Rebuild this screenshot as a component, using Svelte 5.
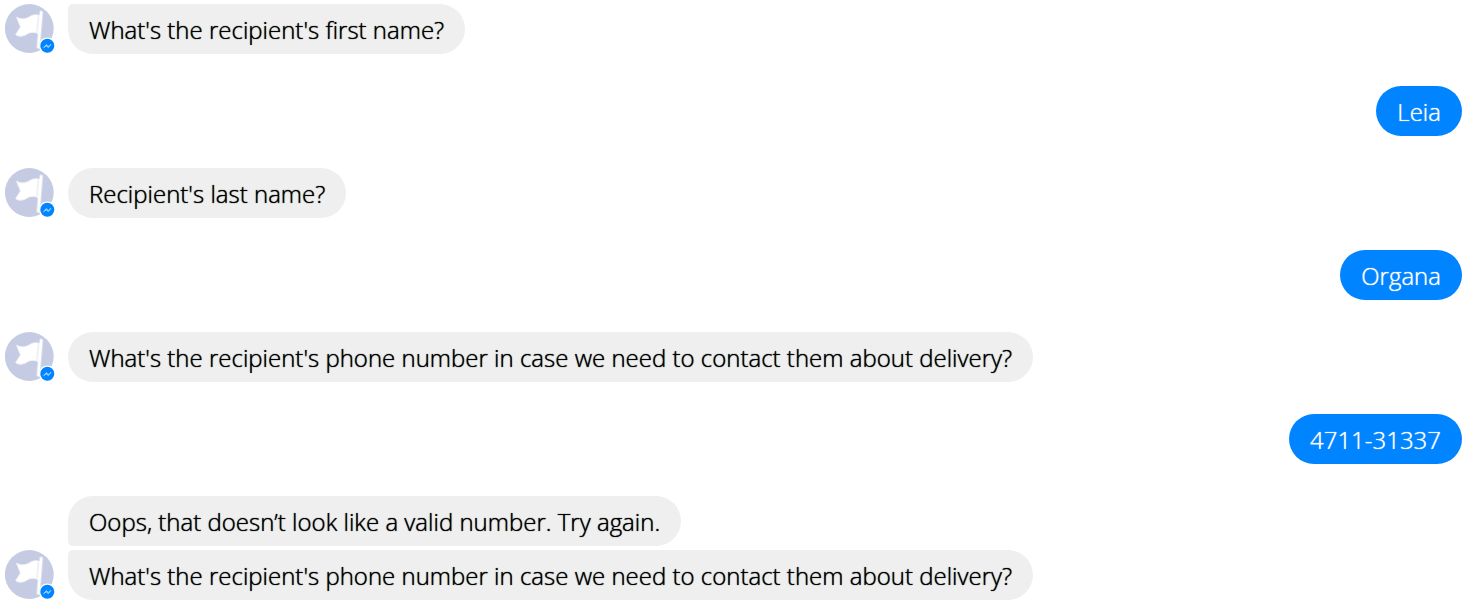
<script>
  const groups = [
    { from: 'bot', messages: ["What's the recipient's first name?"], continued: true },
    { from: 'user', messages: ['Leia'] },
    { from: 'bot', messages: ["Recipient's last name?"] },
    { from: 'user', messages: ['Organa'] },
    { from: 'bot', messages: ["What's the recipient's phone number in case we need to contact them about delivery?"] },
    { from: 'user', messages: ['4711-31337'] },
    {
      from: 'bot',
      messages: [
        'Oops, that doesn’t look like a valid number. Try again.',
        "What's the recipient's phone number in case we need to contact them about delivery?"
      ]
    }
  ];
</script>

<main class="chat">
  {#each groups as group}
    <section class="group {group.from}" class:continued={group.continued}>
      {#if group.from === 'bot'}
        <svg class="avatar" viewBox="0 0 50 52" aria-hidden="true">
          <circle cx="24.3" cy="24.5" r="24.4" fill="#c5cbe3" />
          <path d="M36.2 8.5L33.4 43" stroke="#dadfee" stroke-width="4.4" stroke-linecap="round" />
          <path
            d="M11.6 13.2C17.5 16.5 22 14.4 26 12C29 10.2 32.5 10.6 36 12L33.5 29.5C29 27.8 25.2 28 22 30C18 32.6 14.3 33 10.7 30.7L15.5 23Z"
            fill="#fff" stroke="#f2f4fa" stroke-width="1" stroke-linejoin="round"
          />
          <path d="M32.4 12.5L34.6 12.5L32.6 28L31.2 27.7Z" fill="#f0f0f3" />
          <path d="M36.2 8.5L33.4 43" stroke="#fff" stroke-width="2.4" stroke-linecap="round" />
          <circle cx="42.3" cy="41.8" r="8.4" fill="#fff" />
          <circle cx="42.3" cy="41.8" r="7" fill="#0084ff" />
          <path d="M38.6 43.7L41.2 40.6L43.3 42.4L46 40.3L43.4 43.6L41.2 41.9Z" fill="#8fcaff" stroke="#8fcaff" stroke-width="1" stroke-linejoin="round" />
        </svg>
      {/if}
      <div class="bubbles">
        {#each group.messages as message}
          <p class="bubble">{message}</p>
        {/each}
      </div>
    </section>
  {/each}
</main>

<style>
  :global(body) {
    margin: 0;
    background: #fff;
  }

  .chat {
    display: flex;
    flex-direction: column;
    gap: 32px;
    padding: 4px 3px 3px 5px;
    font-family: "Open Sans", "Noto Sans", sans-serif;
    font-size: 24px;
    font-weight: 300;
    line-height: 30px;
  }

  .group {
    display: flex;
    align-items: flex-end;
    gap: 13px;
  }

  .user {
    justify-content: flex-end;
  }

  .avatar {
    flex: none;
    width: 50px;
    height: 52px;
    margin-bottom: -2px;
  }

  .bubbles {
    display: flex;
    flex-direction: column;
    align-items: flex-start;
    gap: 4px;
  }

  .bubble {
    margin: 0;
    padding: 11px 21px 9px;
    border-radius: 25px;
    background: #efefef;
    color: #000;
    text-shadow: 0 0 1px currentColor;
  }

  .bot .bubble:not(:last-child) {
    border-bottom-left-radius: 5px;
  }

  .bot .bubble:not(:first-child),
  .continued .bubble:first-child {
    border-top-left-radius: 5px;
  }

  .user .bubble {
    background: #0084ff;
    color: #fff;
  }
</style>
